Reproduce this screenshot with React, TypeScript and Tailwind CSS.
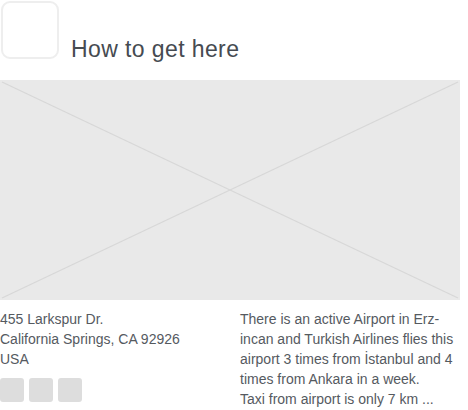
import React from "react";

export default function App() {
  const font = { fontFamily: '"Liberation Sans", Arial, sans-serif' };
  return (
    <div className="w-[468px] h-[410px] bg-white overflow-hidden" style={font}>
      <div className="flex items-start h-[80px]">
        <div className="ml-[1px] mt-[1px] w-[58px] h-[58px] rounded-[9px] border-2 border-[#eeeeee] bg-white" />
        <h1 className="ml-[12px] mt-[35px] text-[23px] leading-[28px] tracking-[0.4px] text-[#464b51] font-normal whitespace-nowrap">
          How to get here
        </h1>
      </div>
      <div className="w-[460px] h-[220px] bg-[#e9e9e9]">
        <svg width="460" height="220" viewBox="0 0 460 220" className="block">
          <line x1="2" y1="2" x2="458" y2="218" stroke="#d7d7d7" strokeWidth="1.2" />
          <line x1="2" y1="218" x2="458" y2="2" stroke="#d7d7d7" strokeWidth="1.2" />
        </svg>
      </div>
      <div className="flex mt-[9px]">
        <div className="w-[240px] text-[14px] leading-[20px] text-[#555a5f]">
          <div>455 Larkspur Dr.</div>
          <div>California Springs, CA 92926</div>
          <div>USA</div>
          <div className="flex gap-[5px] mt-[9px]">
            <div className="w-[24px] h-[24px] rounded-[3px] bg-[#dddddd]" />
            <div className="w-[24px] h-[24px] rounded-[3px] bg-[#dddddd]" />
            <div className="w-[24px] h-[24px] rounded-[3px] bg-[#dddddd]" />
          </div>
        </div>
        <div className="w-[220px] text-[14px] leading-[20px] text-[#555a5f] whitespace-nowrap">
          <div>There is an active Airport in Erz-</div>
          <div>incan and Turkish Airlines flies this</div>
          <div>airport 3 times from İstanbul and 4</div>
          <div>times from Ankara in a week.</div>
          <div>Taxi from airport is only 7 km ...</div>
        </div>
      </div>
    </div>
  );
}
